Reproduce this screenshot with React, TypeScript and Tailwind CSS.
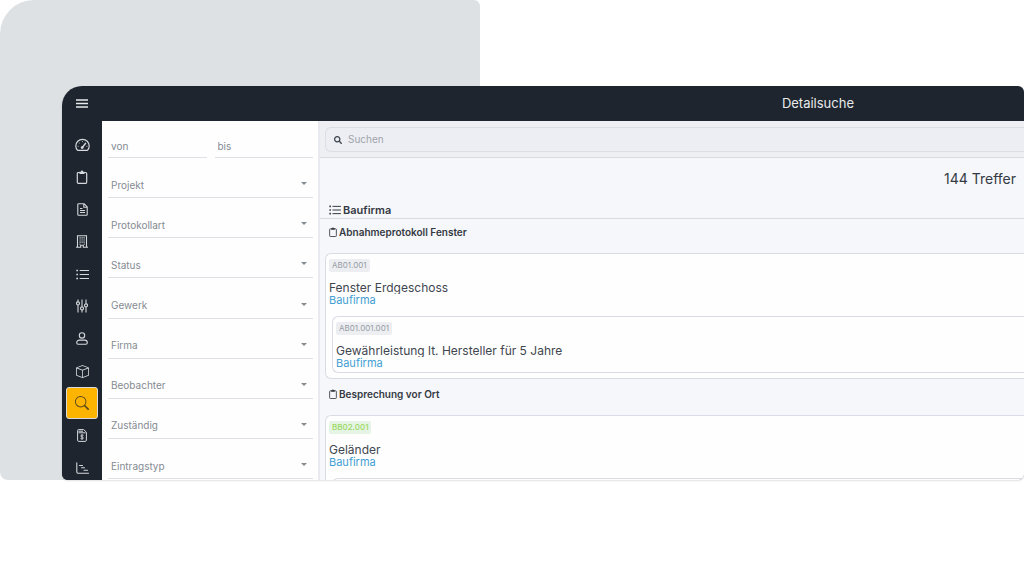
import React from 'react';
import { BsBox, BsSearch } from 'react-icons/bs';
import { FaSearch } from 'react-icons/fa';

interface Entry {
  id: string;
  title: string;
  company: string;
  open?: boolean;
  children?: Entry[];
}

interface Protocol {
  name: string;
  entries: Entry[];
}

const filters = ['Projekt', 'Protokollart', 'Status', 'Gewerk', 'Firma', 'Beobachter', 'Zuständig', 'Eintragstyp'];

const protocols: Protocol[] = [
  {
    name: 'Abnahmeprotokoll Fenster',
    entries: [
      {
        id: 'AB01.001',
        title: 'Fenster Erdgeschoss',
        company: 'Baufirma',
        children: [
          { id: 'AB01.001.001', title: 'Gewährleistung lt. Hersteller für 5 Jahre', company: 'Baufirma' },
        ],
      },
    ],
  },
  {
    name: 'Besprechung vor Ort',
    entries: [
      {
        id: 'BB02.001',
        title: 'Geländer',
        company: 'Baufirma',
        open: true,
        children: [],
      },
    ],
  },
];

const MenuIcon = () => (
  <svg width="12" height="9" viewBox="0 0 12 9" fill="none" stroke="currentColor" strokeWidth="1.5">
    <path d="M0 1h12M0 4.500h12M0 8h12" />
  </svg>
);

const GaugeIcon = () => (
  <svg width="15" height="14" viewBox="0 0 15 14" fill="none" stroke="currentColor" strokeWidth="1.200" strokeLinecap="round">
    <path d="M2.600 12.400C1.400 11.300.8 9.800.8 8a6.700 6.700 0 0 1 13.400 0c0 1.800-.6 3.300-1.800 4.400z" strokeLinejoin="round" />
    <path d="M7.300 9.500 10.600 5.200" strokeWidth="1.400" />
    <circle cx="7.200" cy="9.600" r="1.400" fill="currentColor" stroke="none" />
    <path d="M7.500 3.500v.2M4.300 5v.1M3 8.300h.2M11.900 8.300h.2" strokeWidth=".8" />
  </svg>
);

const ClipboardIcon = ({ size = 14 }: { size?: number }) => (
  <svg width={size} height={size} viewBox="0 0 14 14" fill="none" stroke="currentColor">
    <rect x="2.300" y="2.500" width="9.400" height="10.800" rx="1" strokeWidth="1.200" />
    <path d="M4.500 4V1.800h1.300a1.200 1.200 0 0 1 2.400 0h1.300V4z" fill="currentColor" stroke="none" />
  </svg>
);

const DocumentIcon = () => (
  <svg width="11" height="13" viewBox="0 0 11 13" fill="none" stroke="currentColor" strokeLinejoin="round">
    <path d="M.8 1.500a.8.8 0 0 1 .8-.8H7l3.200 3.200v7.600a.8.8 0 0 1-.8.8H1.600a.8.8 0 0 1-.8-.8zM6.800.8v3.400h3.300" strokeWidth="1.100" />
    <path d="M3 5.500h2.500M3 7.500h5M3 9.500h5" strokeWidth="1.200" />
  </svg>
);

const BuildingIcon = () => (
  <svg width="12" height="13" viewBox="0 0 12 13" fill="none" stroke="currentColor">
    <path d="M1.500 12V.7h9V12M0 12.300h4.700v-2h2.600v2H12" strokeWidth="1.100" />
    <path d="M3.500 2.800h5.200M3.500 5h5.200M3.500 7.200h5.200M3.500 9.200h.9M7.800 9.200h.9" strokeWidth="1.200" strokeDasharray="1.200 .8" />
  </svg>
);

const ListIcon = ({ className }: { className?: string }) => (
  <svg className={className} viewBox="0 0 13 11" fill="none" stroke="currentColor">
    <path d="M3.700 1.500H13M3.700 5.500H13M3.700 9.500H13" strokeWidth="1.100" />
    <path d="M.3 1.500h1.700M.3 5.500h1.700M.3 9.500h1.700" strokeWidth="1.700" />
  </svg>
);

const SlidersIcon = () => (
  <svg width="12" height="14" viewBox="0 0 12 14" fill="none" stroke="currentColor" strokeWidth="1.100">
    <path d="M2 .5v2.300M2 6v7.500M6 .5v7.300M6 11v2.500M10 .5v4.300M10 8v5.500" />
    <circle cx="2" cy="4.400" r="1.500" />
    <circle cx="6" cy="9.400" r="1.500" />
    <circle cx="10" cy="6.400" r="1.500" />
  </svg>
);

const PersonIcon = () => (
  <svg width="12" height="13" viewBox="0 0 12 13" fill="none" stroke="currentColor" strokeWidth="1.100">
    <circle cx="6" cy="3.400" r="2.700" />
    <path d="M3.300 8.100h5.400a2.600 2.600 0 0 1 2.600 2.600c0 1-.6 1.600-1.500 1.600H2.200c-.9 0-1.500-.6-1.500-1.600a2.600 2.600 0 0 1 2.600-2.600z" />
  </svg>
);

const InvoiceIcon = () => (
  <svg width="10" height="13" viewBox="0 0 10 13" fill="none" stroke="currentColor">
    <path d="M1.500.6h5.200l2.700 2.600v8a1.200 1.200 0 0 1-1.200 1.200H1.800A1.200 1.200 0 0 1 .6 11.200V1.500a.9.9 0 0 1 .9-.9z" />
    <path d="M1.500 2.200h4.500M1.500 3.800h7" />
    <path d="M6.500 6.400C6 5.900 3.700 5.800 3.700 7c0 1.300 2.700.7 2.700 2 0 1.200-2.300 1.100-2.900.5M5 5.200v5.600" strokeWidth=".9" />
  </svg>
);

const GanttIcon = () => (
  <svg width="13" height="12" viewBox="0 0 13 12" fill="none" stroke="currentColor" strokeWidth="1.100" strokeLinecap="round">
    <path d="M.8.800v9.200a1.200 1.200 0 0 0 1.200 1.200h10.500M3.500 3.500h3M5.500 5.800h3M8 8.200h3.500" />
  </svg>
);

const navItems = [
  { label: 'Dashboard', icon: <GaugeIcon /> },
  { label: 'Protokolle', icon: <ClipboardIcon /> },
  { label: 'Dokumente', icon: <DocumentIcon /> },
  { label: 'Projekte', icon: <BuildingIcon /> },
  { label: 'Liste', icon: <ListIcon className="h-[11px] w-[13px]" /> },
  { label: 'Einstellungen', icon: <SlidersIcon /> },
  { label: 'Kontakte', icon: <PersonIcon /> },
  { label: 'Objekte', icon: <BsBox size={13} /> },
  { label: 'Detailsuche', icon: <BsSearch size={14} />, active: true },
  { label: 'Rechnungen', icon: <InvoiceIcon /> },
  { label: 'Zeitplan', icon: <GanttIcon /> },
];

const Sidebar = () => (
  <nav className="-mb-1 flex w-10 shrink-0 flex-col items-center justify-between bg-[#1e252e] pt-2 text-[#d5d8dc]">
    {navItems.map(item => (
      <button
        key={item.label}
        aria-label={item.label}
        className={`flex size-8 shrink-0 items-center justify-center ${
          item.active ? 'rounded-[3px] border border-[#d9dade] bg-[#fdb400] text-[#5c4a1c]' : ''
        }`}
      >
        {item.icon}
      </button>
    ))}
  </nav>
);

const DateField = ({ label }: { label: string }) => (
  <input
    type="text"
    aria-label={label}
    placeholder={label}
    className="h-6 min-w-0 flex-1 border-b border-[#dfe1e6] bg-transparent px-[3px] text-[10px] placeholder:text-[#858b92] outline-none"
  />
);

const FilterSelect = ({ label }: { label: string }) => (
  <div className="grid h-10 shrink-0 items-end border-b border-[#dfe1e6]">
    <select
      aria-label={label}
      className="col-start-1 row-start-1 h-6 appearance-none bg-transparent px-[3px] text-[10px] text-[#858b92] outline-none"
    >
      <option>{label}</option>
    </select>
    <svg className="pointer-events-none col-start-1 row-start-1 mr-[6px] mb-3 justify-self-end" width="6" height="3" viewBox="0 0 6 3">
      <path d="M0 0h6L3 3z" fill="#858b92" />
    </svg>
  </div>
);

const FilterPanel = () => (
  <form className="flex w-[218px] shrink-0 flex-col justify-between border-r-2 border-[#e9eaef] bg-[#fefefe] pt-[13px] pr-[5px] pb-px pl-[6px]">
    <div className="flex shrink-0 gap-2">
      <DateField label="von" />
      <DateField label="bis" />
    </div>
    {filters.map(f => (
      <FilterSelect key={f} label={f} />
    ))}
  </form>
);

const EntryCard = ({ entry, nested = false }: { entry: Entry; nested?: boolean }) => (
  <article
    className={`rounded-l-md border border-r-0 border-[#d9dce4] bg-[#fefefe] pl-[3px] ${nested ? 'ml-[3px] pb-[3px]' : 'pb-[5px]'}`}
  >
    <span
      className={`mt-[5px] block h-[13px] w-fit rounded-xs px-[3px] text-[8px] leading-[13px] ${
        entry.open ? 'bg-[#e6f4e6] font-medium text-[#9bd95f]' : 'bg-[#edeef2] text-[#969ba3]'
      }`}
    >
      {entry.id}
    </span>
    <h4 className="mt-2 h-[14px] overflow-hidden text-[12px] leading-4 text-[#41464e]">{entry.title}</h4>
    <a href="#" className="block w-fit text-[11px] leading-3 text-[#439fd3]">
      {entry.company}
    </a>
    {entry.children && (
      <div className="mt-[10px]">
        {entry.children.map(child => (
          <EntryCard key={child.id} entry={child} nested />
        ))}
        {entry.children.length === 0 && (
          <div className="ml-[3px] h-14 rounded-l-md border border-r-0 border-[#d9dce4]" />
        )}
      </div>
    )}
  </article>
);

const Results = () => (
  <main className="min-w-0 flex-1 overflow-hidden bg-[#f6f7fa]">
    <div className="border-b border-[#d9dbe0] bg-[#eeeff3] pt-[6px] pb-[5px] pl-[5px]">
      <label className="flex h-[25px] items-center gap-[6px] rounded-l-md border border-r-0 border-[#dcdee4] bg-[#edeef3] pl-2">
        <FaSearch size={8} className="text-[#3a4049]" />
        <input
          type="search"
          aria-label="Suchen"
          placeholder="Suchen"
          className="min-w-0 flex-1 bg-transparent text-[10px] placeholder:text-[#a0a4ab] outline-none"
        />
      </label>
    </div>
    <p className="mt-[11px] pr-2 text-right text-[14px] leading-5 text-[#343a43]">144 Treffer</p>
    <h2 className="mt-[13px] flex h-[17px] items-center gap-[2px] border-b border-[#d9dbe0] pl-[9px] text-[11px] font-semibold text-[#343a43]">
      <ListIcon className="h-[10px] w-3" />
      Baufirma
    </h2>
    {protocols.map(p => (
      <section key={p.name} className="pb-[2px] pl-[5px]">
        <h3 className="flex h-[34px] items-center gap-px pb-2 pl-[3px] text-[10px] font-semibold text-[#343a43]">
          <ClipboardIcon size={10} />
          {p.name}
        </h3>
        {p.entries.map(e => (
          <EntryCard key={e.id} entry={e} />
        ))}
      </section>
    ))}
  </main>
);

export default function App() {
  return (
    <div className="relative flex h-screen flex-col overflow-hidden bg-white pt-[86px] pb-24 pl-[62px] font-['Inter',sans-serif]">
      <div className="absolute top-0 bottom-24 left-0 w-[480px] rounded-tl-[34px] rounded-tr-md rounded-bl-lg bg-[#dde1e4]" />
      <div className="relative flex min-h-0 flex-1 flex-col overflow-hidden rounded-tl-[20px] rounded-tr-md rounded-b-md bg-[#1e252e] shadow-[0_1px_2px_rgba(0,0,0,0.12)]">
        <header className="flex h-[35px] shrink-0 items-center justify-between pr-[170px] pl-[14px] text-[#e8eaec]">
          <button aria-label="Menü">
            <MenuIcon />
          </button>
          <h1 className="text-[13px]">Detailsuche</h1>
        </header>
        <div className="flex min-h-0 flex-1">
          <Sidebar />
          <FilterPanel />
          <Results />
        </div>
      </div>
    </div>
  );
}
